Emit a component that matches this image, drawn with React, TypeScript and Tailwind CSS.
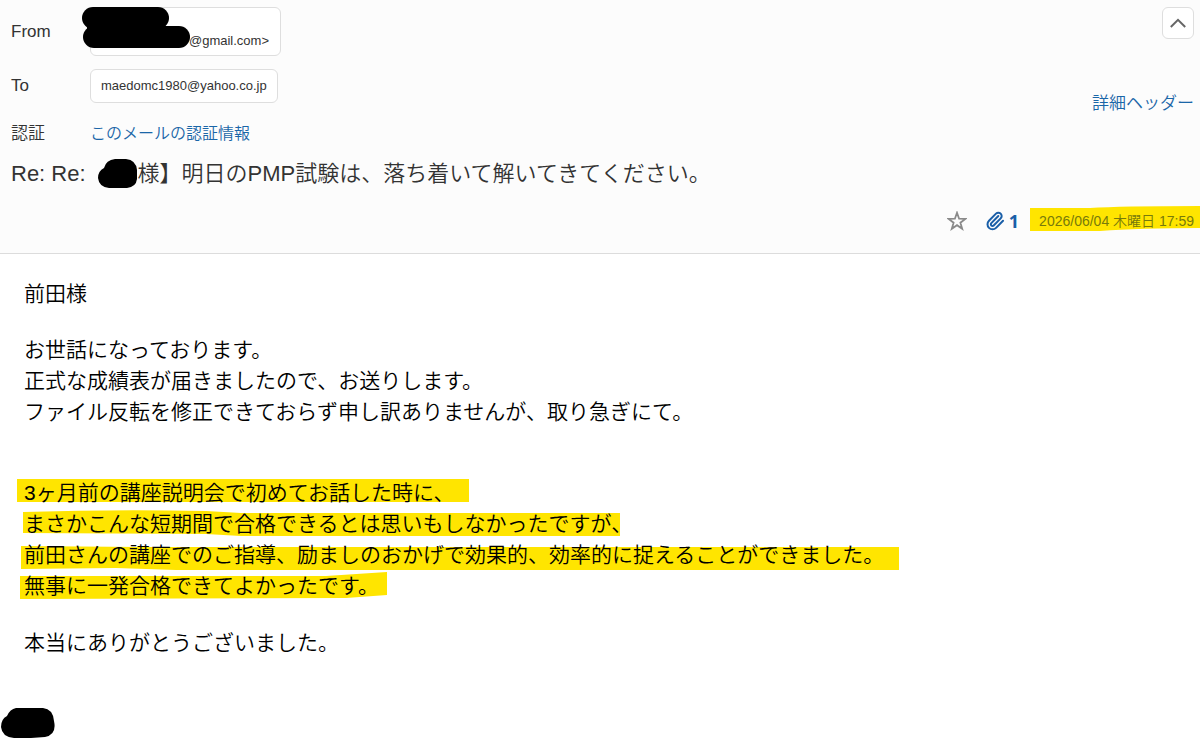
import type { ReactNode } from "react";
import { Paperclip } from "lucide-react";

const linkClass = "text-[#1a66a8] hover:underline";

function FieldRow({ label, children }: { label: string; children: ReactNode }) {
  return (
    <div className="flex items-center">
      <dt className="w-[79px] shrink-0 text-[17px] leading-6">{label}</dt>
      <dd className="min-w-0">{children}</dd>
    </div>
  );
}

/* A line of text with a hand-drawn marker stroke behind it. */
function Marked({ shape, children }: { shape: string; children: ReactNode }) {
  return (
    <span className="relative block w-fit">
      <svg
        className="pointer-events-none absolute top-0 -left-2 h-8 w-[900px] overflow-visible"
        viewBox="0 0 900 32"
        aria-hidden="true"
      >
        <path d={shape} fill="#ffe500" />
      </svg>
      <span className="relative">{children}</span>
    </span>
  );
}

function StarIcon() {
  return (
    <svg className="size-5" viewBox="0 0 20 20" fill="none" stroke="#8a8a8a" strokeWidth="1.8" aria-hidden="true">
      <path d="M10 1.8 12.1 7.7 18.4 7.9 13.4 11.7 15.2 17.8 10 14.2 4.8 17.8 6.6 11.7 1.6 7.9 7.9 7.7Z" />
    </svg>
  );
}

export default function App() {
  return (
    <main className="min-h-screen bg-white font-['Liberation_Sans','Noto_Sans_CJK_JP',sans-serif] font-[350] text-black">
      <header className="border-b border-[#dcdcdc] bg-[#fcfcfc] pt-[7px] pr-[6px] pb-4 pl-[11px] text-[#333]">
        <div className="flex justify-between">
          <dl>
            <FieldRow label="From">
              <div className="relative flex h-[49px] w-[191px] items-end justify-end rounded-md border border-[#dedede] bg-white px-[11px] pb-[6px] text-[13px] leading-4">
                @gmail.com&gt;
                <svg
                  className="absolute -top-px -left-[9px] h-[42px] w-[109px]"
                  viewBox="0 0 109 42"
                  aria-hidden="true"
                >
                  <rect x="0" y="0" width="87" height="22" rx="11" />
                  <rect x="1" y="19" width="107" height="22" rx="11" />
                  <rect x="5" y="9" width="78" height="20" />
                </svg>
              </div>
            </FieldRow>
            <div className="mt-[13px]">
              <FieldRow label="To">
                <div className="flex h-[34px] items-center rounded-md border border-[#dedede] bg-white px-[10px] text-[13px] leading-4">
                  maedomc1980@yahoo.co.jp
                </div>
              </FieldRow>
            </div>
            <div className="mt-[19px]">
              <FieldRow label="認証">
                <a href="#auth" className={`${linkClass} block text-[16px] leading-6`}>
                  このメールの認証情報
                </a>
              </FieldRow>
            </div>
          </dl>
          <div className="flex flex-col items-end justify-between pb-[30px]">
            <button
              type="button"
              aria-label="ヘッダーを閉じる"
              className="flex size-8 items-center justify-center rounded-md border border-[#dedede] bg-white"
            >
              <svg className="h-[10px] w-4" viewBox="0 0 16 10" fill="none" stroke="#666" strokeWidth="2" aria-hidden="true">
                <path d="M.8 9 8 1.8 15.2 9" />
              </svg>
            </button>
            <a href="#headers" className={`${linkClass} text-[17px] leading-6`}>
              詳細ヘッダー
            </a>
          </div>
        </div>
        <h1 className="mt-3 flex items-center text-[22px] leading-8 font-[350]">
          Re: Re:
          <svg className="ml-3 h-[30px] w-10 shrink-0" viewBox="0 0 40 30" aria-hidden="true">
            <path d="M17 0H28Q38 1 39 11V20Q38 28 29 29H11Q1 28 0 19Q0 12 6 9Q8 1 17 0Z" />
          </svg>
          様】明日のPMP試験は、落ち着いて解いてきてください。
        </h1>
        <div className="mt-[15px] flex h-8 items-center justify-end">
          <button type="button" aria-label="スター">
            <StarIcon />
          </button>
          <span className="ml-[18px] flex items-center gap-1 font-['Noto_Sans','Noto_Sans_CJK_JP',sans-serif] text-[18px] leading-6 font-bold text-[#1a5fa8]">
            <Paperclip size={20} strokeWidth={2.4} aria-hidden="true" />1
          </span>
          <time className="relative ml-5 text-[14px] leading-6 text-[#777a0b]">
            <svg
              className="absolute top-0 -right-[6px] h-6 w-[170px] overflow-visible"
              viewBox="0 0 170 24"
              aria-hidden="true"
            >
              <path d="M0 -1H60Q90-3 170-3V19Q110 19 70 22L0 22Z" fill="#ffe500" />
            </svg>
            <span className="relative">2026/06/04 木曜日 17:59</span>
          </time>
        </div>
      </header>

      <article className="pt-6 pl-6 text-[21px] leading-[31px]">
        <p>前田様</p>
        <p className="mt-[25px]">
          お世話になっております。
          <br />
          正式な成績表が届きましたので、お送りします。
          <br />
          ファイル反転を修正できておらず申し訳ありませんが、取り急ぎにて。
        </p>
        <p className="mt-[50px]">
          <Marked shape="M1 2H453V25H1Z">3ヶ月前の講座説明会で初めてお話した時に、</Marked>
          <Marked shape="M7 4Q100 1 190 3L225 5H604V28H225L190 26L7 25Z">
            まさかこんな短期間で合格できるとは思いもしなかったですが、
          </Marked>
          <Marked shape="M5 7L125 8H883V31H160L100 29L5 30Z">
            前田さんの講座でのご指導、励ましのおかげで効果的、効率的に捉えることができました。
          </Marked>
          <Marked shape="M4 6H310L371 2V25L330 28L4 29Z">無事に一発合格できてよかったです。</Marked>
        </p>
        <p className="mt-[26px]">本当にありがとうございました。</p>
        <svg className="mt-[50px] -ml-[23px] h-[31px] w-[54px]" viewBox="0 0 54 31" aria-hidden="true">
          <path d="M15 0H42Q52 1 53 13Q56 27 44 29L30 30H13Q1 29 0 19Q0 11 6 8Q9 1 15 0Z" />
        </svg>
      </article>
    </main>
  );
}
